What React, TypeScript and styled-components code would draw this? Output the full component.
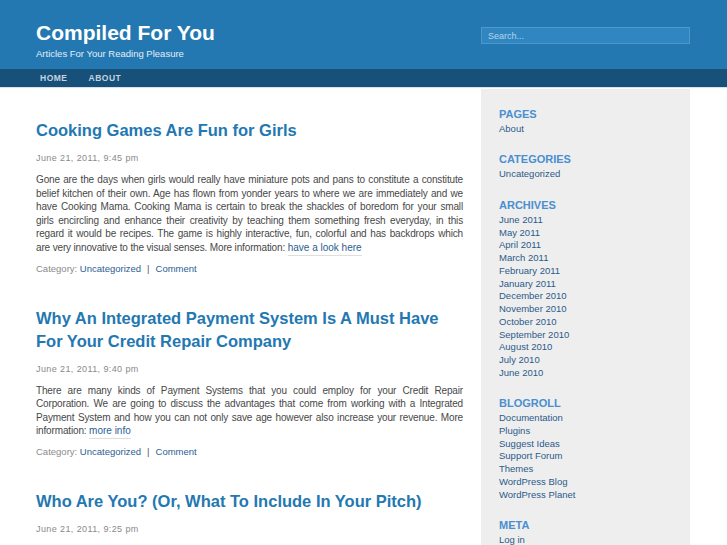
import React from 'react'
import styled, { createGlobalStyle } from 'styled-components'

const Global = createGlobalStyle`
  body {
    margin: 0;
    background: #fff;
    font-family: "Liberation Sans", Arial, sans-serif;
  }
`

const posts = [
  {
    title: 'Cooking Games Are Fun for Girls',
    date: 'June 21, 2011, 9:45 pm',
    body: 'Gone are the days when girls would really have miniature pots and pans to constitute a constitute belief kitchen of their own. Age has flown from yonder years to where we are immediately and we have Cooking Mama. Cooking Mama is certain to break the shackles of boredom for your small girls encircling and enhance their creativity by teaching them something fresh everyday, in this regard it would be recipes. The game is highly interactive, fun, colorful and has backdrops which are very innovative to the visual senses. More information: ',
    link: 'have a look here',
  },
  {
    title: 'Why An Integrated Payment System Is A Must Have For Your Credit Repair Company',
    date: 'June 21, 2011, 9:40 pm',
    body: 'There are many kinds of Payment Systems that you could employ for your Credit Repair Corporation. We are going to discuss the advantages that come from working with a Integrated Payment System and how you can not only save age however also increase your revenue. More information: ',
    link: 'more info',
  },
  {
    title: 'Who Are You? (Or, What To Include In Your Pitch)',
    date: 'June 21, 2011, 9:25 pm',
    body: 'In my nearly 20 years in public relations I have learned that there is no substitute for a good pitch, and the first thing any reporter wants to know is who you are and why they should care about what you have to say. ',
    link: 'read more',
  },
]

const widgets = [
  { title: 'Pages', items: ['About'] },
  { title: 'Categories', items: ['Uncategorized'] },
  {
    title: 'Archives',
    items: [
      'June 2011', 'May 2011', 'April 2011', 'March 2011', 'February 2011', 'January 2011',
      'December 2010', 'November 2010', 'October 2010', 'September 2010', 'August 2010',
      'July 2010', 'June 2010',
    ],
  },
  {
    title: 'Blogroll',
    items: ['Documentation', 'Plugins', 'Suggest Ideas', 'Support Forum', 'Themes', 'WordPress Blog', 'WordPress Planet'],
  },
  { title: 'Meta', items: ['Log in', 'Entries RSS', 'Comments RSS'] },
]

export default function App() {
  return (
    <Page>
      <Global />
      <Header>
        <Brand>
          <SiteTitle>Compiled For You</SiteTitle>
          <Tagline>Articles For Your Reading Pleasure</Tagline>
        </Brand>
        <Search placeholder="Search..." />
      </Header>
      <Nav>
        <NavLink>Home</NavLink>
        <NavLink>About</NavLink>
      </Nav>
      <Body>
        <Main>
          {posts.map((p) => (
            <Post key={p.title}>
              <PostTitle>{p.title}</PostTitle>
              <PostDate>{p.date}</PostDate>
              <PostText>
                {p.body}
                <MoreLink>{p.link}</MoreLink>
              </PostText>
              <PostMeta>
                Category: <MetaLink>Uncategorized</MetaLink>
                <Sep>|</Sep>
                <MetaLink>Comment</MetaLink>
              </PostMeta>
            </Post>
          ))}
        </Main>
        <Sidebar>
          {widgets.map((w) => (
            <Widget key={w.title}>
              <WidgetTitle>{w.title}</WidgetTitle>
              <WidgetList>
                {w.items.map((i) => (
                  <WidgetItem key={i}>{i}</WidgetItem>
                ))}
              </WidgetList>
            </Widget>
          ))}
        </Sidebar>
      </Body>
    </Page>
  )
}

const Page = styled.div`
  height: 545px;
  overflow: hidden;
`

const Header = styled.header`
  height: 69px;
  background: #2378b2;
  display: flex;
  justify-content: space-between;
  align-items: flex-start;
  padding: 0 37px 0 36px;
  box-sizing: border-box;
`

const Brand = styled.div`
  padding-top: 20px;
`

const SiteTitle = styled.h1`
  margin: 0;
  font-size: 21px;
  line-height: 26px;
  font-weight: bold;
  color: #fff;
`

const Tagline = styled.div`
  margin-top: 2px;
  font-size: 9.5px;
  color: #e4eef6;
`

const Search = styled.input`
  margin-top: 27px;
  width: 209px;
  height: 17px;
  box-sizing: border-box;
  padding: 0 6px;
  background: #2f86c0;
  border: 1px solid #4e98c9;
  font-family: "Liberation Sans", Arial, sans-serif;
  font-size: 9px;
  color: #fff;
  outline: none;
  &::placeholder {
    color: #b9d5ea;
  }
`

const Nav = styled.nav`
  height: 18px;
  background: #175078;
  border-bottom: 1px solid #d6e3ec;
  display: flex;
  align-items: center;
  gap: 21px;
  padding-left: 40px;
`

const NavLink = styled.a`
  font-size: 8.5px;
  font-weight: bold;
  letter-spacing: 0.5px;
  text-transform: uppercase;
  color: #c4d4e1;
`

const Body = styled.div`
  display: flex;
  align-items: flex-start;
  gap: 18px;
  padding: 1px 0 0 36px;
`

const Main = styled.main`
  width: 427px;
  flex-shrink: 0;
  padding-top: 30px;
`

const Post = styled.article`
  margin-bottom: 33px;
`

const PostTitle = styled.h2`
  margin: 0;
  font-size: 16.5px;
  line-height: 23px;
  font-weight: bold;
  color: #2378b2;
`

const PostDate = styled.div`
  margin-top: 11px;
  font-size: 9px;
  letter-spacing: 0.4px;
  color: #8a8a8a;
`

const PostText = styled.p`
  margin: 10px 0 0;
  font-size: 10px;
  line-height: 13.6px;
  letter-spacing: -0.15px;
  color: #484848;
  text-align: justify;
`

const MoreLink = styled.a`
  color: #2b5d95;
  letter-spacing: 0;
  border-bottom: 1px solid #dedede;
  padding-bottom: 2px;
`

const PostMeta = styled.div`
  margin-top: 8px;
  font-size: 9.5px;
  color: #8a8a8a;
`

const MetaLink = styled.a`
  color: #2b5d95;
`

const Sep = styled.span`
  margin: 0 6px;
  color: #555;
`

const Sidebar = styled.aside`
  width: 209px;
  flex-shrink: 0;
  min-height: 460px;
  box-sizing: border-box;
  background: #eeeeee;
  padding: 18px 18px 0;
`

const Widget = styled.section`
  margin-bottom: 16.67px;
`

const WidgetTitle = styled.h3`
  margin: 0 0 2px;
  font-size: 11px;
  line-height: 14px;
  font-weight: bold;
  text-transform: uppercase;
  color: #4a8fd0;
`

const WidgetList = styled.ul`
  margin: 0;
  padding: 0;
  list-style: none;
`

const WidgetItem = styled.li`
  font-size: 9.5px;
  line-height: 12.75px;
  color: #2b5a8a;
`
